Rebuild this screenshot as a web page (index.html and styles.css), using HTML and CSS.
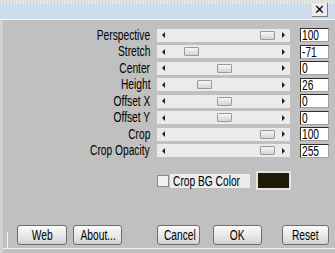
FILE: index.html
```html
<!DOCTYPE html>
<html lang="en">
<head>
    <meta charset="UTF-8">
    <title>Perspective</title>
    <link rel="stylesheet" href="styles.css">
</head>
<body>
    <div class="top">
        <div class="titlebar">
            <span class="close">&#x2715;</span>
        </div>
    </div>
    <div class="main">
        <div class="params">
            <label><span class="nx">Perspective</span></label>
            <div class="track"><span class="arrow left"></span><span class="thumb" style="left: 103px;"></span><span class="arrow right"></span></div>
            <span class="num"><span class="nx">100</span></span>

            <label><span class="nx">Stretch</span></label>
            <div class="track"><span class="arrow left"></span><span class="thumb" style="left: 27px;"></span><span class="arrow right"></span></div>
            <span class="num"><span class="nx">-71</span></span>

            <label><span class="nx">Center</span></label>
            <div class="track"><span class="arrow left"></span><span class="thumb" style="left: 60px;"></span><span class="arrow right"></span></div>
            <span class="num"><span class="nx">0</span></span>

            <label><span class="nx">Height</span></label>
            <div class="track"><span class="arrow left"></span><span class="thumb" style="left: 40px;"></span><span class="arrow right"></span></div>
            <span class="num"><span class="nx">26</span></span>

            <label><span class="nx">Offset X</span></label>
            <div class="track"><span class="arrow left"></span><span class="thumb" style="left: 60px;"></span><span class="arrow right"></span></div>
            <span class="num"><span class="nx">0</span></span>

            <label><span class="nx">Offset Y</span></label>
            <div class="track"><span class="arrow left"></span><span class="thumb" style="left: 60px;"></span><span class="arrow right"></span></div>
            <span class="num"><span class="nx">0</span></span>

            <label><span class="nx">Crop</span></label>
            <div class="track"><span class="arrow left"></span><span class="thumb" style="left: 103px;"></span><span class="arrow right"></span></div>
            <span class="num"><span class="nx">100</span></span>

            <label><span class="nx">Crop Opacity</span></label>
            <div class="track"><span class="arrow left"></span><span class="thumb" style="left: 103px;"></span><span class="arrow right"></span></div>
            <span class="num"><span class="nx">255</span></span>
        </div>

        <div class="bg-row">
            <span class="check"></span>
            <span class="check-label"><span class="nx">Crop BG Color</span></span>
            <span class="swatch"></span>
        </div>

        <div class="buttons">
            <span class="edge"></span>
            <button class="btn-web"><span class="nx">Web</span></button>
            <button class="btn-about"><span class="nx">About...</span></button>
            <button class="btn-cancel"><span class="nx">Cancel</span></button>
            <button class="btn-ok"><span class="nx">OK</span></button>
            <button class="btn-reset"><span class="nx">Reset</span></button>
        </div>
    </div>
</body>
</html>
```

FILE: styles.css
```css
html, body {
    margin: 0;
    padding: 0;
    width: 335px;
    height: 253px;
    overflow: hidden;
}
body {
    background: #c0c0c0;
    font-family: "Liberation Sans", Arial, sans-serif;
    font-size: 14px;
    color: #000;
}
/* narrow look of the dialog font */
.nx {
    display: inline-block;
    white-space: nowrap;
    transform: scaleX(0.73);
}
.top {
    padding-top: 4px;
    background: repeating-linear-gradient(90deg, #d6d6d6 0 1px, #e6e6e6 1px 3px);
}
.titlebar {
    height: 15px;
    background: #cedded;
    border-bottom: 1px solid #f4f8fb;
    display: flex;
    justify-content: flex-end;
    padding-right: 7px;
}
.close {
    width: 15px;
    height: 13px;
    margin-top: -1px;
    background: #ececec;
    border-right: 1px solid #808080;
    border-bottom: 1px solid #808080;
    font-family: "DejaVu Sans", sans-serif;
    font-weight: bold;
    font-size: 13px;
    line-height: 13px;
    text-align: center;
}
.main {
    border-left: 3px solid #d2d2d2;
    height: 233px;
    display: flex;
    flex-direction: column;
}
.params {
    display: grid;
    grid-template-columns: 147px 133px 29px;
    grid-auto-rows: 16.5px;
    column-gap: 7px;
    align-items: center;
    margin-top: 7px;
}
.params label {
    text-align: right;
    line-height: 15px;
}
.params label .nx {
    transform-origin: right center;
}
.track {
    position: relative;
    height: 13px;
    background: #ebebeb;
    display: flex;
    justify-content: space-between;
    align-items: center;
    padding: 0 5px;
}
.arrow {
    width: 0;
    height: 0;
    border-top: 3px solid transparent;
    border-bottom: 3px solid transparent;
}
.arrow.left {
    border-right: 3px solid #202020;
}
.arrow.right {
    border-left: 3px solid #202020;
}
.thumb {
    position: absolute;
    top: 2px;
    width: 13px;
    height: 7px;
    background: linear-gradient(#f6f6f6, #d4d4d4);
    border: 1px solid #9a9a9a;
    border-radius: 1px;
}
.num {
    width: 29px;
    height: 14px;
    box-sizing: border-box;
    margin-left: 3px;
    padding: 0 1px;
    border: 1px solid #303030;
    border-right-color: #a0a0a0;
    border-bottom-color: #a0a0a0;
    background: #fff;
    line-height: 13px;
    overflow: hidden;
}
.num .nx {
    transform-origin: left center;
}
.bg-row {
    display: flex;
    align-items: center;
    margin: 12px 0 0 154px;
    height: 19px;
}
.check {
    width: 10px;
    height: 10px;
    background: #f0f0f0;
    border: 1px solid #8a8a8a;
}
.check-label {
    width: 77px;
    height: 14px;
    line-height: 14px;
    background: #ececec;
    margin-left: 1px;
    padding-left: 3px;
}
.check-label .nx {
    transform-origin: left center;
}
.swatch {
    width: 31px;
    height: 15px;
    margin-left: 6px;
    background: #1c1c08;
    border: 2px solid #e4e4e4;
}
.buttons {
    display: flex;
    align-items: flex-end;
    margin-top: auto;
    height: 24px;
    border-bottom: 1px solid #f2f2f2;
    margin-bottom: 4px;
}
.edge {
    width: 4px;
    height: 16px;
    border-right: 1px solid #f2f2f2;
}
button {
    height: 20px;
    margin: 0 0 3px 0;
    padding: 0;
    border: 1px solid #6e6e6e;
    border-radius: 3px;
    background: linear-gradient(#fbfbfb, #e2e2e2 70%, #cfcfcf);
    font: inherit;
    color: #000;
    line-height: 18px;
}
.btn-web { width: 50px; margin-left: 9px; }
.btn-about { width: 49px; margin-left: 6px; }
.btn-cancel { width: 43px; margin-left: 35px; }
.btn-ok { width: 49px; margin-left: 13px; }
.btn-reset { width: 47px; margin-left: 20px; }
```
